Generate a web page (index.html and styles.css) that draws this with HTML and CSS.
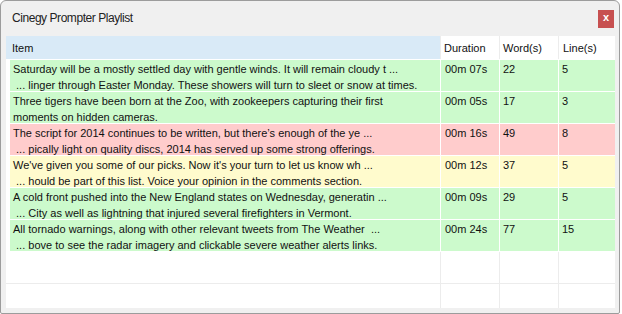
FILE: index.html
```html
<!DOCTYPE html>
<html lang="en">
<head>
  <meta charset="UTF-8">
  <title>Cinegy Prompter Playlist</title>
  <link rel="stylesheet" href="styles.css">
</head>
<body>

  <div class="window">
    <div class="titlebar">
      <span class="title">Cinegy Prompter Playlist</span>
      <span class="close">x</span>
    </div>

    <div class="grid">
      <!-- Header -->
      <div class="row head">
        <div class="cell item">Item</div>
        <div class="cell">Duration</div>
        <div class="cell">Word(s)</div>
        <div class="cell">Line(s)</div>
      </div>

      <!-- Items -->
      <div class="row ok">
        <div class="cell item">Saturday will be a mostly settled day with gentle winds. It will remain cloudy t ...<br>&nbsp;... linger through Easter Monday. These showers will turn to sleet or snow at times.</div>
        <div class="cell">00m 07s</div>
        <div class="cell">22</div>
        <div class="cell">5</div>
      </div>
      <div class="row ok">
        <div class="cell item">Three tigers have been born at the Zoo, with zookeepers capturing their first<br>moments on hidden cameras.</div>
        <div class="cell">00m 05s</div>
        <div class="cell">17</div>
        <div class="cell">3</div>
      </div>
      <div class="row long">
        <div class="cell item">The script for 2014 continues to be written, but there’s enough of the ye ...<br>&nbsp;... pically light on quality discs, 2014 has served up some strong offerings.</div>
        <div class="cell">00m 16s</div>
        <div class="cell">49</div>
        <div class="cell">8</div>
      </div>
      <div class="row warn">
        <div class="cell item">We've given you some of our picks. Now it's your turn to let us know wh ...<br>&nbsp;... hould be part of this list. Voice your opinion in the comments section.</div>
        <div class="cell">00m 12s</div>
        <div class="cell">37</div>
        <div class="cell">5</div>
      </div>
      <div class="row ok">
        <div class="cell item">A cold front pushed into the New England states on Wednesday, generatin ...<br>&nbsp;... City as well as lightning that injured several firefighters in Vermont.</div>
        <div class="cell">00m 09s</div>
        <div class="cell">29</div>
        <div class="cell">5</div>
      </div>
      <div class="row ok">
        <div class="cell item">All tornado warnings, along with other relevant tweets from The Weather &nbsp;...<br>&nbsp;... bove to see the radar imagery and clickable severe weather alerts links.</div>
        <div class="cell">00m 24s</div>
        <div class="cell">77</div>
        <div class="cell">15</div>
      </div>

      <!-- Empty rows -->
      <div class="row empty">
        <div class="cell"></div>
        <div class="cell"></div>
        <div class="cell"></div>
        <div class="cell"></div>
      </div>
      <div class="row empty last">
        <div class="cell"></div>
        <div class="cell"></div>
        <div class="cell"></div>
        <div class="cell"></div>
      </div>
    </div>
  </div>

</body>
</html>
```

FILE: styles.css
```css
* {
  margin: 0;
  padding: 0;
  box-sizing: border-box;
}

body {
  background: #ffffff;
  font-family: 'Liberation Sans', Arial, sans-serif;
  font-size: 11px;
  color: #111;
}

.window {
  width: 620px;
  height: 314px;
  background: #f0f0f0;
  border: 1px solid #9c9c9c;
  border-radius: 6px 6px 2px 2px;
  padding: 0 4px 5px 5px;
  display: flex;
  flex-direction: column;
}

.titlebar {
  height: 35px;
  display: flex;
  align-items: center;
  justify-content: space-between;
  padding: 0 1px 2px 6px;
}

.title {
  font-size: 12px;
  letter-spacing: -0.45px;
  color: #222;
}

.close {
  width: 16px;
  height: 18px;
  margin-top: 2px;
  background: #c75050;
  color: #fff;
  font-weight: bold;
  font-size: 11px;
  display: flex;
  align-items: center;
  justify-content: center;
  line-height: 1;
  padding-bottom: 2px;
}

.grid {
  flex: 1;
  background: #ffffff;
  display: flex;
  flex-direction: column;
  overflow: hidden;
}

.row {
  display: grid;
  grid-template-columns: 434px 58px 58px 56px;
  column-gap: 1px;
  height: 32px;
  background: #ffffff;
  border-bottom: 1px solid #ffffff;
}

.cell {
  padding: 1px 0 0 4px;
  line-height: 16px;
  white-space: nowrap;
  overflow: hidden;
}

.row.head {
  height: 24px;
  background: #ececec;
}

.row.head .cell {
  background: #ffffff;
  line-height: 22px;
  padding: 1px 0 0 3px;
}

.row.head .item {
  background: #d9eaf7;
  padding-left: 6px;
}

.row.head .cell:last-child {
  padding-left: 4px;
}

.row .cell:nth-child(3),
.row .cell:nth-child(4) {
  padding-left: 3px;
}

.row.ok .cell { background: #ccfacc; }
.row.long .cell { background: #ffcccc; }
.row.warn .cell { background: #fffbcd; }

.row.ok .item,
.row.long .item,
.row.warn .item {
  margin-left: 4px;
  padding-left: 3px;
}

.row.empty {
  height: 32px;
  background: #ececec;
  border-bottom-color: #ececec;
}

.row.empty .cell {
  background: #ffffff;
}

.row.empty.last {
  flex: 1;
  border-bottom: none;
}
```
